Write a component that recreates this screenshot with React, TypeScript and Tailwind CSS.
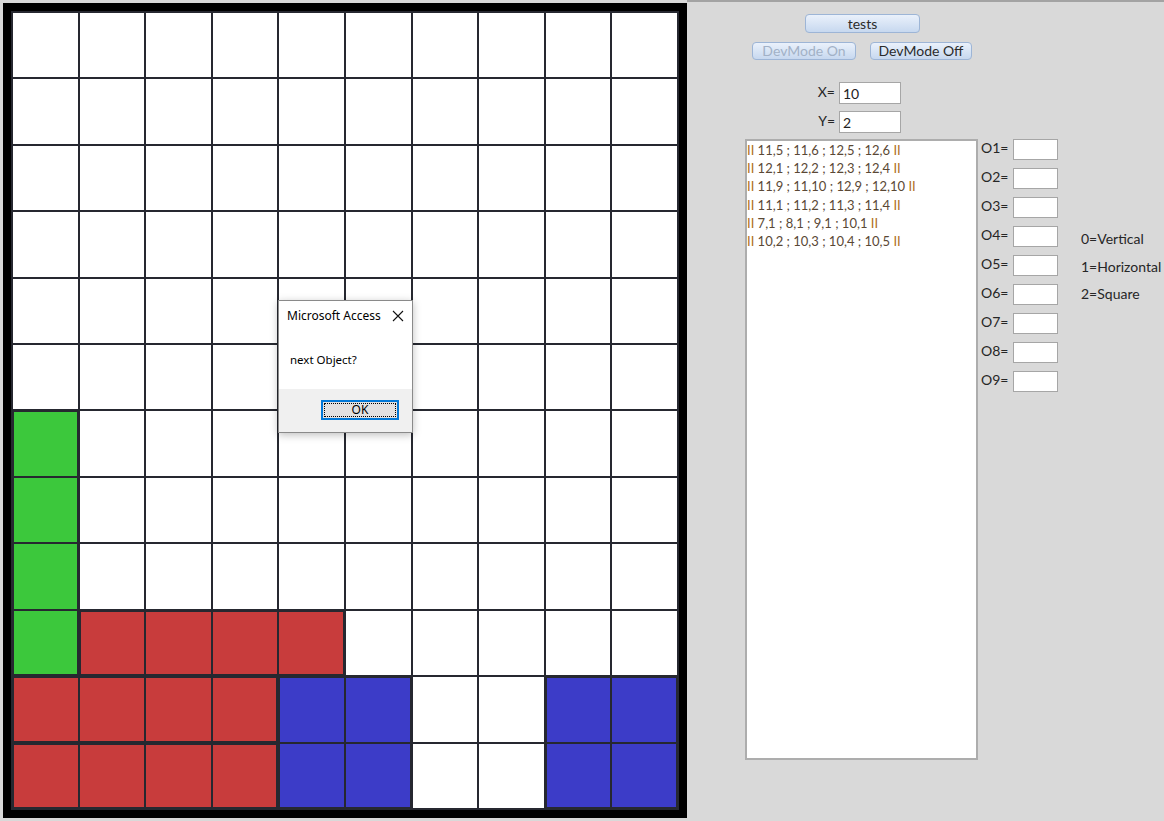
import React from 'react';

type Piece = { id: string; color: string; cells: [number, number][] };

// row, col pairs (1-based) as listed in the form
const pieces: Piece[] = [
  { id: 'a', color: 'bg-[#3c3cc8]', cells: [[11, 5], [11, 6], [12, 5], [12, 6]] },
  { id: 'b', color: 'bg-[#c83c3c]', cells: [[12, 1], [12, 2], [12, 3], [12, 4]] },
  { id: 'c', color: 'bg-[#3c3cc8]', cells: [[11, 9], [11, 10], [12, 9], [12, 10]] },
  { id: 'd', color: 'bg-[#c83c3c]', cells: [[11, 1], [11, 2], [11, 3], [11, 4]] },
  { id: 'e', color: 'bg-[#3cc83c]', cells: [[7, 1], [8, 1], [9, 1], [10, 1]] },
  { id: 'f', color: 'bg-[#c83c3c]', cells: [[10, 2], [10, 3], [10, 4], [10, 5]] },
];

const lines = [
  '11,5 ; 11,6 ; 12,5 ; 12,6',
  '12,1 ; 12,2 ; 12,3 ; 12,4',
  '11,9 ; 11,10 ; 12,9 ; 12,10',
  '11,1 ; 11,2 ; 11,3 ; 11,4',
  '7,1 ; 8,1 ; 9,1 ; 10,1',
  '10,2 ; 10,3 ; 10,4 ; 10,5',
];

const font = { fontFamily: 'Lato, "Open Sans", sans-serif' };

function pieceAt(r: number, c: number) {
  return pieces.find((p) => p.cells.some(([pr, pc]) => pr === r && pc === c));
}

function Board() {
  const cells = [];
  for (let r = 1; r <= 12; r++) {
    for (let c = 1; c <= 10; c++) {
      const p = pieceAt(r, c);
      if (!p) {
        cells.push(<div key={`${r}-${c}`} className="bg-white" />);
        continue;
      }
      const edge = (rr: number, cc: number) => pieceAt(rr, cc)?.id !== p.id;
      cells.push(
        <div
          key={`${r}-${c}`}
          className={`${p.color} border-[#262830] ${edge(r - 1, c) ? 'border-t' : ''} ${edge(r + 1, c) ? 'border-b' : ''} ${edge(r, c - 1) ? 'border-l' : ''} ${edge(r, c + 1) ? 'border-r' : ''}`}
        />
      );
    }
  }
  return (
    <div className="self-start ml-[3px] mt-[3px] border-[8px] border-black shrink-0">
      <div className="grid grid-cols-10 grid-rows-12 gap-[2px] p-[2px] bg-[#262830] w-[668px] h-[799px]">
        {cells}
      </div>
    </div>
  );
}

function Dialog() {
  return (
    <div
      className="absolute left-[278px] top-[300px] w-[135px] h-[133px] bg-white border border-[#8a8a8a] shadow-[0_2px_8px_rgba(0,0,0,0.25)] flex flex-col text-[12px] text-black"
      style={{ fontFamily: '"Noto Sans", "Open Sans", sans-serif' }}
    >
      <div className="h-[29px] flex items-center justify-between pl-[8px] pr-[8px]">
        <span>Microsoft Access</span>
        <svg width="12" height="12" viewBox="0 0 12 12">
          <path d="M1 1 L11 11 M11 1 L1 11" stroke="#111" strokeWidth="1.1" />
        </svg>
      </div>
      <div className="h-[59px] flex items-center pl-[11px]">
        <span className="text-[11.5px]">next Object?</span>
      </div>
      <div className="flex-1 bg-[#f0f0f0] flex justify-end pr-[13px] pt-[11px]">
        <div className="w-[78px] h-[20px] border-2 border-[#0078d7] bg-[#e1e1e1] p-[1px]">
          <div className="w-full h-full border border-dotted border-black flex items-center justify-center text-[12px]">
            OK
          </div>
        </div>
      </div>
    </div>
  );
}

function Btn({ label, size, disabled }: { label: string; size: string; disabled?: boolean }) {
  return (
    <div
      className={`${size} rounded-[4px] border border-[#9db5d6] bg-gradient-to-b from-[#eaf1fb] to-[#c7d8ef] flex items-center justify-center text-[14px] leading-none ${disabled ? 'text-[#a2b1c6]' : 'text-[#2b2b2b]'}`}
    >
      {label}
    </div>
  );
}

function Field({ value, className }: { value?: string; className: string }) {
  return (
    <div className={`${className} bg-white border border-[#a6a6a6] flex items-center pl-[3px] text-[14px] text-[#222]`}>
      {value}
    </div>
  );
}

export default function App() {
  return (
    <div className="relative w-[1164px] h-[821px] bg-[#d9d9d9] flex overflow-hidden" style={font}>
      <Board />
      <div className="flex-1 border-t-2 border-[#a3a3a3] flex flex-col text-[#262626]">
        <div className="ml-[118px] mt-[12px]">
          <Btn label="tests" size="w-[115px] h-[19px]" />
        </div>
        <div className="ml-[65px] mt-[9px] flex gap-[14px]">
          <Btn label="DevMode On" size="w-[104px] h-[18px]" disabled />
          <Btn label="DevMode Off" size="w-[102px] h-[18px]" />
        </div>
        <div className="mt-[22px] ml-[128px] flex items-center gap-[4px] text-[14px]">
          <span className="w-[20px] text-right leading-none -mt-[2px]">X=</span>
          <Field value="10" className="w-[62px] h-[22px]" />
        </div>
        <div className="mt-[7px] ml-[128px] flex items-center gap-[4px] text-[14px]">
          <span className="w-[20px] text-right leading-none -mt-[2px]">Y=</span>
          <Field value="2" className="w-[62px] h-[22px]" />
        </div>
        <div className="mt-[6px] ml-[58px] flex">
          <div className="w-[233px] h-[621px] bg-white border-2 border-[#adadad] text-[13px] leading-[18.2px] text-[#5a4835] whitespace-nowrap">
            {lines.map((l) => (
              <div key={l}>
                <span className="text-[#b0701c]">II</span> {l} <span className="text-[#b0701c]">II</span>
              </div>
            ))}
          </div>
          <div className="ml-[3px] flex flex-col gap-[8px] text-[14px]">
            {[1, 2, 3, 4, 5, 6, 7, 8, 9].map((n) => (
              <div key={n} className="flex items-center">
                <span className="w-[32px] leading-none -mt-[3px]">O{n}=</span>
                <Field className="w-[45px] h-[21px]" />
              </div>
            ))}
          </div>
          <div className="ml-[23px] pt-[86px] flex flex-col text-[14px] leading-[27.5px]">
            <span>0=Vertical</span>
            <span>1=Horizontal</span>
            <span>2=Square</span>
          </div>
        </div>
      </div>
      <Dialog />
    </div>
  );
}
